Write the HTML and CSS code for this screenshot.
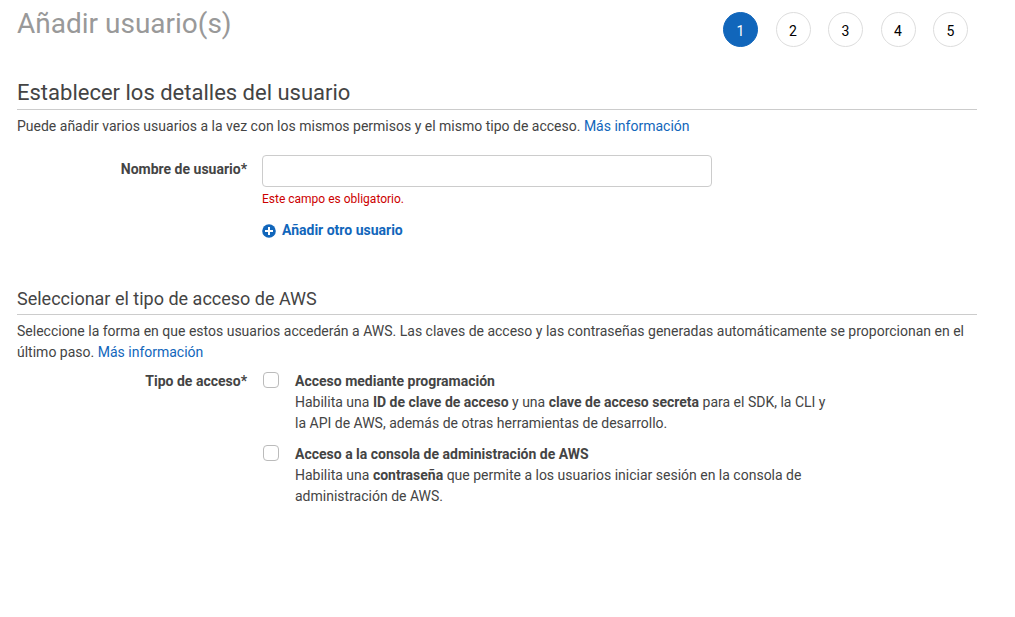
FILE: index.html
```html
<!DOCTYPE html>
<html lang="es">
<head>
<meta charset="utf-8">
<title>Añadir usuario(s)</title>
<link rel="stylesheet" href="styles.css">
</head>
<body>
<main class="page">
  <header class="page-header">
    <h1 class="page-title">Añadir usuario(s)</h1>
    <ol class="steps">
      <li class="step step-active" aria-current="step">1</li>
      <li class="step">2</li>
      <li class="step">3</li>
      <li class="step">4</li>
      <li class="step">5</li>
    </ol>
  </header>
  <form>
    <section class="details">
      <h2 class="section-title">Establecer los detalles del usuario</h2>
      <p class="intro">Puede añadir varios usuarios a la vez con los mismos permisos y el mismo tipo de acceso. <a href="#">Más información</a></p>
      <div class="form-row">
        <label class="row-label name-label" for="username">Nombre de usuario*</label>
        <div class="row-content">
          <input class="text-input" id="username" type="text" aria-describedby="username-error">
          <p class="error" id="username-error">Este campo es obligatorio.</p>
          <button class="add-button" type="button">
            <svg class="add-icon" viewBox="0 0 14 14" aria-hidden="true"><circle cx="7" cy="7" r="6.8" fill="#1166bb"/><path d="M7 3v8M3 7h8" stroke="#fff" stroke-width="2"/></svg>
            Añadir otro usuario
          </button>
        </div>
      </div>
    </section>
    <section>
      <h2 class="section-title section-title-small">Seleccionar el tipo de acceso de AWS</h2>
      <p class="intro">Seleccione la forma en que estos usuarios accederán a AWS. Las claves de acceso y las contraseñas generadas automáticamente se proporcionan en el último paso. <a href="#">Más información</a></p>
      <div class="form-row access-row" role="group" aria-labelledby="access-label">
        <span class="row-label" id="access-label">Tipo de acceso*</span>
        <div class="options">
          <div class="option">
            <input class="checkbox" type="checkbox" id="programmatic">
            <label class="option-text" for="programmatic"><strong>Acceso mediante programación</strong><br>Habilita una <strong>ID de clave de acceso</strong> y una <strong>clave de acceso secreta</strong> para el SDK, la CLI y la API de AWS, además de otras herramientas de desarrollo.</label>
          </div>
          <div class="option">
            <input class="checkbox" type="checkbox" id="console">
            <label class="option-text" for="console"><strong>Acceso a la consola de administración de AWS</strong><br>Habilita una <strong>contraseña</strong> que permite a los usuarios iniciar sesión en la consola de administración de AWS.</label>
          </div>
        </div>
      </div>
    </section>
  </form>
</main>
</body>
</html>
```
FILE: styles.css
```css
* { box-sizing: border-box; }
body {
  margin: 0;
  background: #fff;
  color: #444;
  font: 14px/21px Roboto, "Liberation Sans", sans-serif;
}
h1, h2, p, ol { margin: 0; padding: 0; font-weight: 400; }
a { color: #1166bb; text-decoration: none; }
.page { padding: 6px 38px 40px 17px; }
.page-header { display: flex; justify-content: space-between; align-items: flex-start; }
.page-title { color: #999; font-size: 28px; line-height: 36px; }
.steps {
  display: flex;
  justify-content: space-between;
  width: 254px;
  padding: 6px 9px 0 0;
  list-style: none;
}
.step {
  width: 35px;
  height: 35px;
  border: 1px solid #ddd;
  border-radius: 50%;
  color: #000;
  line-height: 36px;
  text-align: center;
}
.step-active { background: #1166bb; border-color: #1166bb; color: #fff; }
.details { padding-top: 30px; }
.section-title { border-bottom: 1px solid #ccc; font-size: 22px; line-height: 32px; }
.section-title-small { font-size: 18px; line-height: 30px; }
.intro { padding-top: 6px; }
.form-row { display: flex; gap: 15px; padding-top: 18px; }
.access-row { padding-top: 8px; }
.row-label { width: 230px; flex: none; text-align: right; font-weight: 700; }
.name-label { padding-top: 4px; }
.row-content { flex: 1; max-width: 450px; }
.text-input {
  display: block;
  width: 100%;
  height: 32px;
  padding: 4px 8px;
  border: 1px solid #ccc;
  border-radius: 4px;
  font: inherit;
}
.error { padding-top: 2px; color: #cc0000; font-size: 12px; }
.add-button {
  display: flex;
  align-items: center;
  gap: 6px;
  margin: 10px 0 43px;
  padding: 0;
  border: 0;
  background: none;
  color: #1166bb;
  font: inherit;
  font-weight: 700;
}
.add-icon { width: 14px; height: 14px; }
.options { display: flex; flex-direction: column; gap: 10px; max-width: 576px; }
.option { display: flex; align-items: flex-start; gap: 16px; }
.checkbox {
  appearance: none;
  flex: none;
  width: 16px;
  height: 16px;
  margin: 1px 0 0 1px;
  border: 1px solid #bbb;
  border-radius: 4px;
  background: #fff;
}
.checkbox:checked { background: #1166bb; }
```
